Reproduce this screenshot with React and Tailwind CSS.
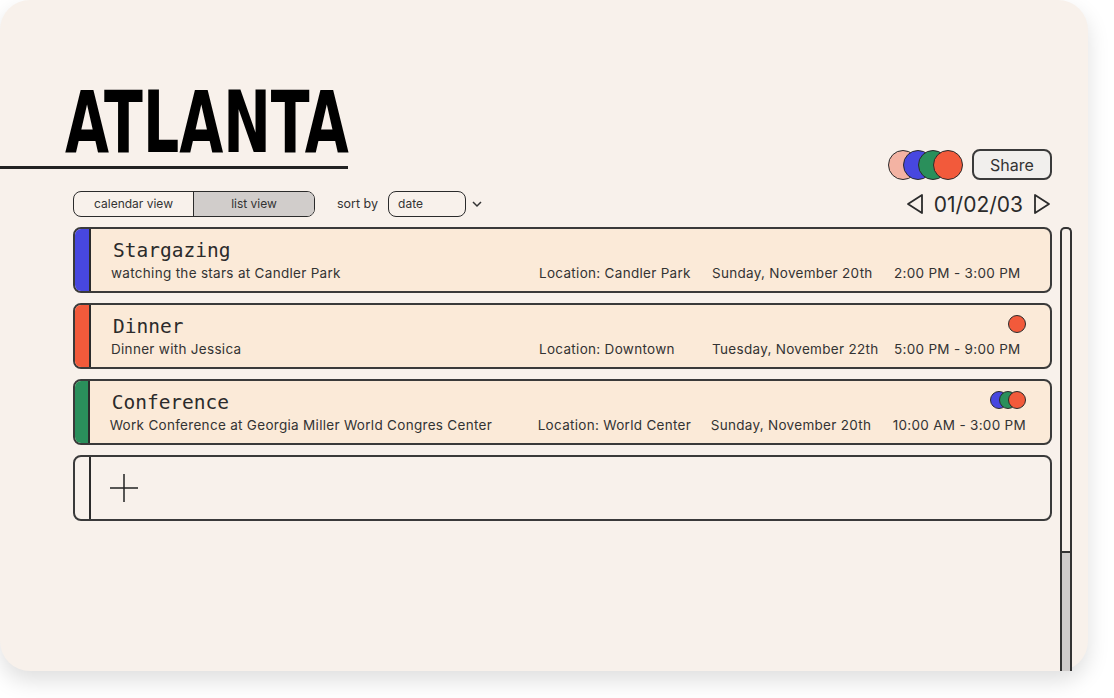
import React from 'react';

const events = [
  {
    title: 'Stargazing',
    desc: 'watching the stars at Candler Park',
    location: 'Location: Candler Park',
    date: 'Sunday, November 20th',
    time: '2:00 PM - 3:00 PM',
    stripe: 'bg-[#4747e0]',
    people: [],
  },
  {
    title: 'Dinner',
    desc: 'Dinner with Jessica',
    location: 'Location: Downtown',
    date: 'Tuesday, November 22th',
    time: '5:00 PM - 9:00 PM',
    stripe: 'bg-[#f25a3b]',
    people: ['bg-[#f25a3b]'],
  },
  {
    title: 'Conference',
    desc: 'Work Conference at Georgia Miller World Congres Center',
    location: 'Location: World Center',
    date: 'Sunday, November 20th',
    time: '10:00 AM - 3:00 PM',
    stripe: 'bg-[#2a8f5b]',
    people: ['bg-[#4747e0]', 'bg-[#2a8f5b]', 'bg-[#f25a3b]'],
  },
];

function Triangle({ dir }) {
  // outlined arrow for the date pager
  const pts = dir === 'left' ? '17,2 17,20 3,11' : '3,2 3,20 17,11';
  return (
    <svg width="20" height="22" viewBox="0 0 20 22">
      <polygon points={pts} fill="none" stroke="#2b2b2b" strokeWidth="1.8" strokeLinejoin="round" />
    </svg>
  );
}

function EventRow({ ev }) {
  return (
    <div className="flex h-[66px] rounded-[8px] border-2 border-[#3a3a3a] bg-[#fbead8] overflow-hidden">
      <div className={`w-[16px] border-r-2 border-[#2b2b2b] ${ev.stripe}`} />
      <div className="flex-1 flex flex-col justify-center pl-[20px] pr-[24px]">
        <div className="flex items-center justify-between h-[24px]">
          <span className="text-[19.5px] text-[#2b2b2b] font-['DejaVu_Sans_Mono',monospace] leading-none pl-[2px]">
            {ev.title}
          </span>
          <div className="flex -mt-[6px]">
            {ev.people.map((c, i) => (
              <span
                key={i}
                className={`w-[18px] h-[18px] rounded-full border border-[#2b2b2b] ${c} ${i > 0 ? '-ml-[9px]' : ''}`}
              />
            ))}
          </div>
        </div>
        <div className="mt-[2px] flex h-[17px] items-center text-[13.5px] tracking-[0.3px] text-[#333] whitespace-nowrap">
          <span className="w-[428px]">{ev.desc}</span>
          <span className="w-[173px]">{ev.location}</span>
          <span className="w-[182px]">{ev.date}</span>
          <span>{ev.time}</span>
        </div>
      </div>
    </div>
  );
}

export default function App() {
  return (
    <div className="w-[1114px] h-[698px] bg-white font-['Inter',sans-serif]">
      <div className="relative w-[1088px] h-[671px] rounded-[30px] bg-[#f8f1eb] shadow-[0_10px_22px_rgba(0,0,0,0.13)] flex flex-col">
        {/* header */}
        <div className="flex items-start justify-between pr-[36px]">
          <div className="pt-[79px]">
            <div className="pl-[65px]">
              <h1 className="text-[86px] leading-none font-bold text-black font-['Liberation_Sans_Narrow','DejaVu_Sans_Condensed',sans-serif] origin-left scale-x-[0.735]">
                ATLANTA
              </h1>
            </div>
            <div className="mt-[1px] h-[3px] w-[348px] bg-[#222]" />
          </div>
          <div className="mt-[149px] flex items-center">
            <div className="flex">
              {['bg-[#f3b3a3]', 'bg-[#4747e0]', 'bg-[#2a8f5b]', 'bg-[#f25a3b]'].map((c, i) => (
                <span
                  key={c}
                  className={`w-[30px] h-[30px] rounded-full border-[1.5px] border-[#2b2b2b] ${c} ${i > 0 ? '-ml-[15px]' : ''}`}
                />
              ))}
            </div>
            <button className="ml-[9px] w-[80px] h-[31px] rounded-[8px] border-2 border-[#3a3a3a] bg-[#f1efed] text-[16px] text-[#333]">
              Share
            </button>
          </div>
        </div>

        {/* controls */}
        <div className="mt-[11px] flex items-center justify-between pl-[73px] pr-[36px]">
          <div className="flex items-center">
            <div className="flex h-[26px] w-[242px] rounded-[8px] border-[1.5px] border-[#2b2b2b] overflow-hidden text-[12px] text-[#333]">
              <div className="w-[120px] flex items-center justify-center border-r-[1.5px] border-[#2b2b2b]">calendar view</div>
              <div className="flex-1 flex items-center justify-center bg-[#d1cdcb]">list view</div>
            </div>
            <span className="ml-[22px] text-[12.5px] text-[#333]">sort by</span>
            <div className="ml-[10px] h-[26px] w-[78px] rounded-[8px] border-[1.5px] border-[#2b2b2b] flex items-center pl-[9px] text-[12px] text-[#333]">
              date
            </div>
            <svg className="ml-[5px]" width="12" height="10" viewBox="0 0 12 10">
              <polyline points="2,3 6,7 10,3" fill="none" stroke="#333" strokeWidth="1.5" />
            </svg>
          </div>
          <div className="flex items-center gap-[9px] text-[21px] text-[#2b2b2b]">
            <Triangle dir="left" />
            <span className="leading-none">01/02/03</span>
            <Triangle dir="right" />
          </div>
        </div>

        {/* list + scrollbar */}
        <div className="mt-[10px] flex flex-1">
          <div className="ml-[73px] w-[979px] flex flex-col gap-[10px]">
            {events.map((ev) => (
              <EventRow key={ev.title} ev={ev} />
            ))}
            <div className="flex h-[66px] rounded-[8px] border-2 border-[#3a3a3a] overflow-hidden">
              <div className="w-[16px] border-r-2 border-[#2b2b2b]" />
              <div className="flex items-center pl-[18px]">
                <svg width="30" height="30" viewBox="0 0 30 30">
                  <line x1="15" y1="1" x2="15" y2="29" stroke="#222" strokeWidth="1.5" />
                  <line x1="1" y1="15" x2="29" y2="15" stroke="#222" strokeWidth="1.5" />
                </svg>
              </div>
            </div>
          </div>
          <div className="ml-[8px] w-[12px] flex flex-col border-x-2 border-t-2 border-[#333] rounded-t-[5px]">
            <div className="h-[322px]" />
            <div className="flex-1 border-t-2 border-[#333] bg-[#cfcccb]" />
          </div>
        </div>
      </div>
    </div>
  );
}
